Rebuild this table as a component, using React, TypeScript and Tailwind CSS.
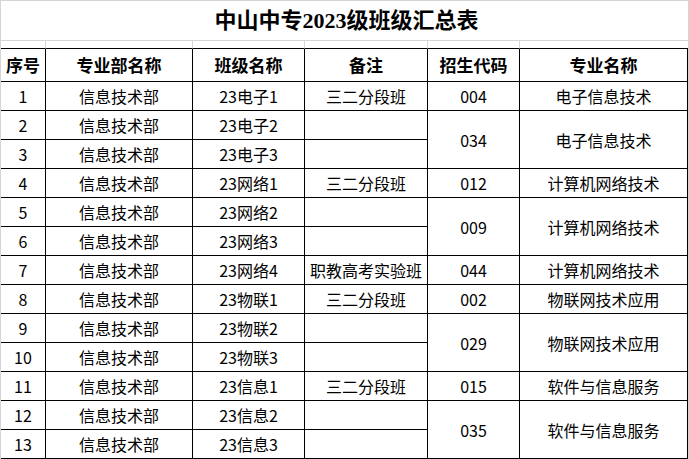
import { Fragment } from "react";

const rows: { n: number; cls: string; note?: string; code?: string; major?: string; span?: boolean }[] = [
  { n: 1, cls: "23电子1", note: "三二分段班", code: "004", major: "电子信息技术" },
  { n: 2, cls: "23电子2", note: "", code: "034", major: "电子信息技术", span: true },
  { n: 3, cls: "23电子3", note: "" },
  { n: 4, cls: "23网络1", note: "三二分段班", code: "012", major: "计算机网络技术" },
  { n: 5, cls: "23网络2", note: "", code: "009", major: "计算机网络技术", span: true },
  { n: 6, cls: "23网络3", note: "" },
  { n: 7, cls: "23网络4", note: "职教高考实验班", code: "044", major: "计算机网络技术" },
  { n: 8, cls: "23物联1", note: "三二分段班", code: "002", major: "物联网技术应用" },
  { n: 9, cls: "23物联2", note: "", code: "029", major: "物联网技术应用", span: true },
  { n: 10, cls: "23物联3", note: "" },
  { n: 11, cls: "23信息1", note: "三二分段班", code: "015", major: "软件与信息服务" },
  { n: 12, cls: "23信息2", note: "", code: "035", major: "软件与信息服务", span: true },
  { n: 13, cls: "23信息3", note: "" },
];

const cell = "flex items-center justify-center border-r border-b border-black";

export default function App() {
  return (
    <div className="w-[689px] h-[459px] bg-white overflow-hidden">
      <div
        className="grid grid-cols-[45px_147px_112px_123px_92px_168px] grid-rows-[40px_8px_33px_repeat(13,29px)] border-l border-t border-r border-[#d4d4d4] text-black"
        style={{ fontFamily: '"Noto Sans CJK SC", sans-serif' }}
      >
        <div
          className="col-span-6 flex items-center justify-center border-b border-[#d4d4d4] text-[22px] font-bold pl-[4px]"
          style={{ fontFamily: '"Liberation Serif", "Noto Sans CJK SC", serif' }}
        >
          中山中专2023级班级汇总表
        </div>
        <div className="border-r border-b border-r-[#d4d4d4] border-b-black" />
        <div className="border-r border-b border-r-[#d4d4d4] border-b-black" />
        <div className="border-r border-b border-r-[#d4d4d4] border-b-black" />
        <div className="border-r border-b border-r-[#d4d4d4] border-b-black" />
        <div className="border-r border-b border-r-[#d4d4d4] border-b-black" />
        <div className="border-b border-black" />

        {["序号", "专业部名称", "班级名称", "备注", "招生代码", "专业名称"].map((h) => (
          <div key={h} className={`${cell} text-[17px] font-bold`}>
            {h}
          </div>
        ))}

        {rows.map((r) => (
          <Fragment key={r.n}>
            <div className={`${cell} text-[16px]`}>{r.n}</div>
            <div className={`${cell} text-[16px]`}>信息技术部</div>
            <div className={`${cell} text-[16px]`}>{r.cls}</div>
            <div className={`${cell} text-[16px]`}>{r.note}</div>
            {r.code && (
              <div className={`${cell} text-[16px] ${r.span ? "row-span-2" : ""}`}>{r.code}</div>
            )}
            {r.major && (
              <div className={`${cell} text-[16px] ${r.span ? "row-span-2" : ""}`}>{r.major}</div>
            )}
          </Fragment>
        ))}
      </div>
    </div>
  );
}
